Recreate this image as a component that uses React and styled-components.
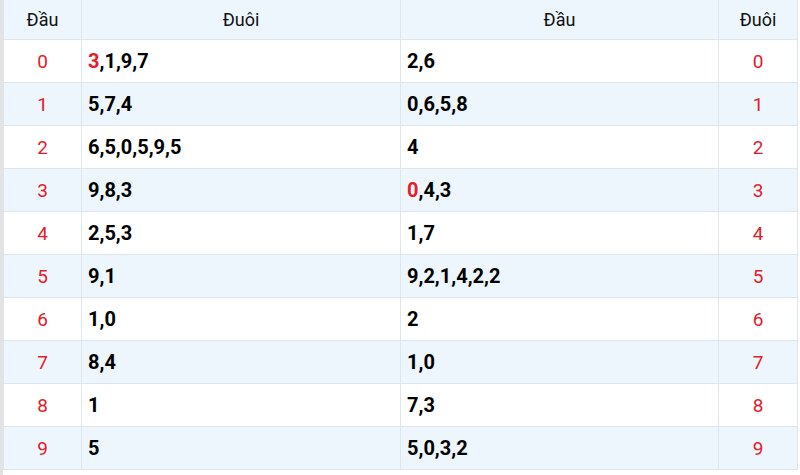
import React from "react";
import styled, { createGlobalStyle } from "styled-components";

const GlobalStyle = createGlobalStyle`
  body {
    margin: 0;
    background: #fff;
    font-family: Roboto, "Noto Sans", sans-serif;
  }
`;

const Wrap = styled.div`
  width: 800px;
  height: 475px;
  overflow: hidden;
  padding-left: 3px;
  box-sizing: border-box;
  background: linear-gradient(to right, #e3e3e3 3px, #fff 3px);
`;

const Table = styled.table`
  width: 794px;
  border-collapse: collapse;
  table-layout: fixed;
  background: #fff;
`;

const Th = styled.th`
  height: 39px;
  padding: 0;
  font-weight: 400;
  font-size: 18px;
  color: #111;
  background: #eef6fd;
  border: 1px solid #dde6ee;
  border-top: none;
`;

const Tr = styled.tr`
  background: ${(p) => (p.$alt ? "#eef6fd" : "#fff")};
`;

const Key = styled.td`
  height: 42px;
  padding: 0;
  text-align: center;
  font-size: 19px;
  color: #e3202a;
  border: 1px solid #dde6ee;
`;

const Nums = styled.td`
  height: 42px;
  padding: 0 0 0 6px;
  font-size: 20px;
  font-weight: 700;
  color: #000;
  border: 1px solid #dde6ee;
`;

const Hot = styled.span`
  color: #e3202a;
`;

const rows = [
  ["3,1,9,7", "2,6", "3"],
  ["5,7,4", "0,6,5,8"],
  ["6,5,0,5,9,5", "4"],
  ["9,8,3", "0,4,3", null, "0"],
  ["2,5,3", "1,7"],
  ["9,1", "9,2,1,4,2,2"],
  ["1,0", "2"],
  ["8,4", "1,0"],
  ["1", "7,3"],
  ["5", "5,0,3,2"],
];

function Cell({ text, hot }) {
  if (hot && text.startsWith(hot)) {
    return (
      <Nums>
        <Hot>{hot}</Hot>
        {text.slice(hot.length)}
      </Nums>
    );
  }
  return <Nums>{text}</Nums>;
}

export default function App() {
  return (
    <Wrap>
      <GlobalStyle />
      <Table>
        <colgroup>
          <col style={{ width: 78 }} />
          <col style={{ width: 319 }} />
          <col style={{ width: 318 }} />
          <col style={{ width: 79 }} />
        </colgroup>
        <thead>
          <tr>
            <Th>Đầu</Th>
            <Th>Đuôi</Th>
            <Th>Đầu</Th>
            <Th>Đuôi</Th>
          </tr>
        </thead>
        <tbody>
          {rows.map((r, i) => (
            <Tr key={i} $alt={i % 2 === 1}>
              <Key>{i}</Key>
              <Cell text={r[0]} hot={r[2]} />
              <Cell text={r[1]} hot={r[3]} />
              <Key>{i}</Key>
            </Tr>
          ))}
        </tbody>
      </Table>
    </Wrap>
  );
}
